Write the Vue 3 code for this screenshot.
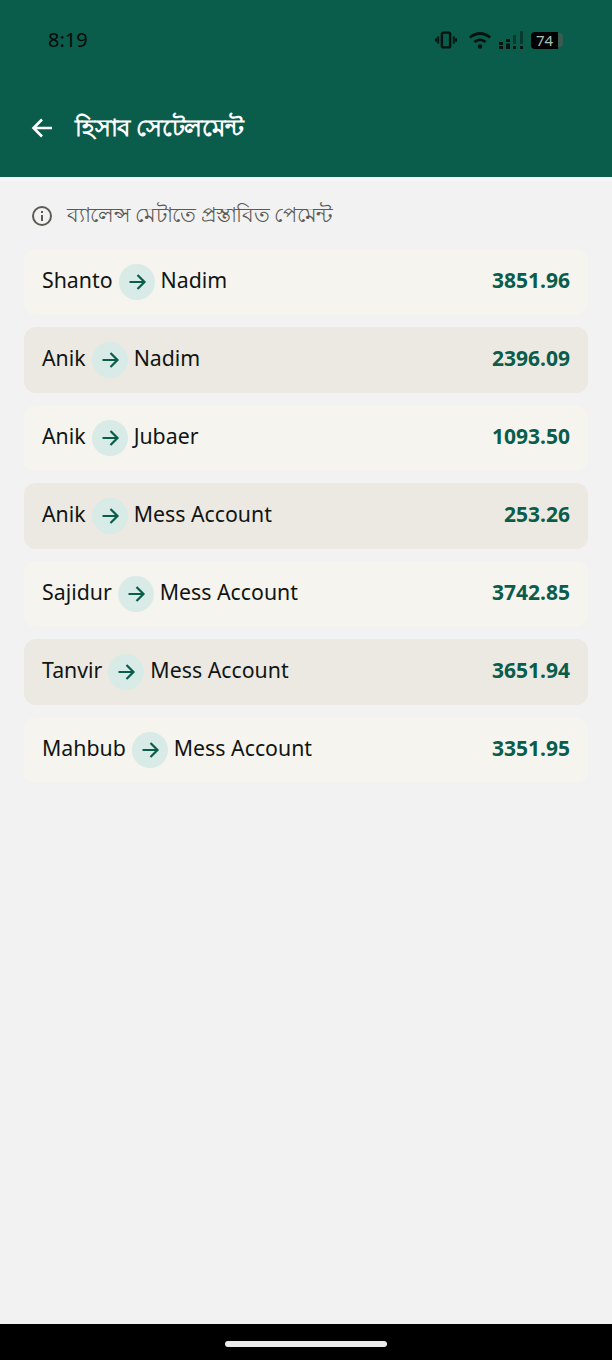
<template>
  <div class="screen">
    <header class="app-header">
      <div class="status-bar">
        <span class="clock">8:19</span>
        <div class="status-icons">
          <svg class="vibrate-icon" width="22" height="20" viewBox="0 0 24 20" fill="none" stroke="#06130f">
            <rect x="7.5" y="2" width="9" height="16" rx="1.5" stroke-width="2.6" />
            <path d="M3.5 6v8M1 8v4M20.5 6v8M23 8v4" stroke-width="2" />
          </svg>
          <svg class="wifi-icon" width="24" height="18" viewBox="0 0 24 18" fill="#06130f">
            <path d="M1 5.5C7.5-.5 16.5-.5 23 5.5l-1.8 2C15.8 2.8 8.2 2.8 2.8 7.5z" />
            <path d="M5.5 10c4-3.5 9-3.5 13 0l-1.9 2c-3-2.5-6.2-2.5-9.2 0z" />
            <circle cx="12" cy="15.5" r="2.2" />
          </svg>
          <svg width="26" height="20" viewBox="0 0 26 20" fill="#06130f">
            <rect x="0" y="12" width="4" height="3" />
            <rect x="0" y="16" width="4" height="3" />
            <rect x="7" y="9" width="4" height="3" />
            <rect x="7" y="13.5" width="4" height="5.5" />
            <rect x="14" y="5" width="3" height="9" opacity="0.45" />
            <rect x="14" y="16" width="3" height="3" />
            <rect x="21" y="1" width="3" height="13" opacity="0.45" />
            <rect x="21" y="16" width="3" height="3" />
          </svg>
          <div class="battery">
            <span class="battery-level">74</span>
            <span class="battery-rest"></span>
          </div>
        </div>
      </div>
      <div class="title-bar">
        <svg class="back-icon" width="24" height="24" viewBox="0 0 24 24" fill="none" stroke="#fff" stroke-width="2.6">
          <path d="M22 12H3M12 3.5 3.5 12l8.5 8.5" />
        </svg>
        <h1 class="title">হিসাব সেটেলমেন্ট</h1>
      </div>
    </header>

    <main class="content">
      <div class="hint">
        <svg width="22" height="22" viewBox="0 0 22 22" fill="none" stroke="#5c5a55" stroke-width="2">
          <circle cx="11" cy="11" r="9" />
          <path d="M11 10v6M11 6v2" />
        </svg>
        <span>ব্যালেন্স মেটাতে প্রস্তাবিত পেমেন্ট</span>
      </div>

      <div class="list">
        <div v-for="(item, i) in payments" :key="i" class="row" :class="{ alt: i % 2 === 1 }">
          <div class="names">
            <span class="name">{{ item.from }}</span>
            <span class="arrow">
              <svg width="20" height="20" viewBox="0 0 20 20" fill="none" stroke="#0a5c4b" stroke-width="2.2">
                <path d="M2.5 10h15M10.5 3l7 7-7 7" />
              </svg>
            </span>
            <span class="name">{{ item.to }}</span>
          </div>
          <span class="amount">{{ item.amount }}</span>
        </div>
      </div>
    </main>

    <div class="nav-bar">
      <span class="home-pill"></span>
    </div>
  </div>
</template>

<script setup>
const payments = [
  { from: 'Shanto', to: 'Nadim', amount: '3851.96' },
  { from: 'Anik', to: 'Nadim', amount: '2396.09' },
  { from: 'Anik', to: 'Jubaer', amount: '1093.50' },
  { from: 'Anik', to: 'Mess Account', amount: '253.26' },
  { from: 'Sajidur', to: 'Mess Account', amount: '3742.85' },
  { from: 'Tanvir', to: 'Mess Account', amount: '3651.94' },
  { from: 'Mahbub', to: 'Mess Account', amount: '3351.95' }
];
</script>

<style>
html,
body {
  margin: 0;
  background: #f2f2f2;
}
</style>

<style scoped>
.screen {
  width: 612px;
  height: 1360px;
  display: flex;
  flex-direction: column;
  background: #f2f2f2;
  font-family: "Noto Sans", "Open Sans", sans-serif;
  overflow: hidden;
}

.app-header {
  height: 177px;
  flex-shrink: 0;
  background: #0a5c4b;
  box-sizing: border-box;
}

.status-bar {
  height: 80px;
  display: flex;
  align-items: center;
  justify-content: space-between;
  padding: 0 48px;
  box-sizing: border-box;
}

.clock {
  font-size: 20px;
  color: #020a08;
  padding-bottom: 2px;
}

.status-icons {
  display: flex;
  align-items: center;
  gap: 6px;
  margin-right: 1px;
}

.vibrate-icon {
  margin-right: 5px;
}

.wifi-icon {
  margin-right: 1px;
}

.battery {
  display: flex;
  align-items: center;
  height: 18px;
}

.battery-level {
  width: 27px;
  height: 17px;
  line-height: 16px;
  background: #000;
  color: #a9c2b9;
  font-size: 15px;
  text-align: center;
  border-radius: 4px 0 0 4px;
}

.battery-rest {
  width: 5px;
  height: 14px;
  background: #3a5c50;
  border-radius: 0 4px 4px 0;
}

.title-bar {
  display: flex;
  align-items: center;
  gap: 21px;
  padding: 2px 30px 0;
  height: 94px;
  box-sizing: border-box;
}

.title {
  margin: 0;
  padding-top: 2px;
  font-size: 24px;
  letter-spacing: -0.3px;
  font-weight: 700;
  color: #fff;
}

.content {
  flex: 1;
  padding: 0 24px;
  border-top: 4px solid #f5f5f5;
}

.hint {
  display: flex;
  align-items: center;
  gap: 14px;
  height: 68px;
  padding: 2px 0 0 7px;
  box-sizing: border-box;
  font-size: 21px;
  letter-spacing: -0.55px;
  color: #5c5a55;
}

.list {
  display: flex;
  flex-direction: column;
  gap: 12px;
}

.row {
  height: 66px;
  display: flex;
  align-items: center;
  justify-content: space-between;
  padding: 0 18px;
  box-sizing: border-box;
  background: #f6f4ef;
  border-radius: 12px;
  font-size: 21.3px;
  color: #101513;
}

.row.alt {
  background: #ece9e3;
}

.names {
  display: flex;
  align-items: center;
  gap: 6px;
}

.name {
  padding-bottom: 6px;
}

.arrow {
  width: 36px;
  height: 36px;
  display: flex;
  align-items: center;
  justify-content: center;
  border-radius: 50%;
  background: #d8ebe6;
}

.amount {
  padding-bottom: 4px;
  font-size: 21px;
  font-weight: 700;
  color: #0a5c4b;
}

.nav-bar {
  height: 36px;
  flex-shrink: 0;
  background: #000;
  display: flex;
  justify-content: center;
  padding-top: 17px;
  box-sizing: border-box;
}

.home-pill {
  width: 162px;
  height: 6px;
  border-radius: 3px;
  background: #ececec;
}
</style>
